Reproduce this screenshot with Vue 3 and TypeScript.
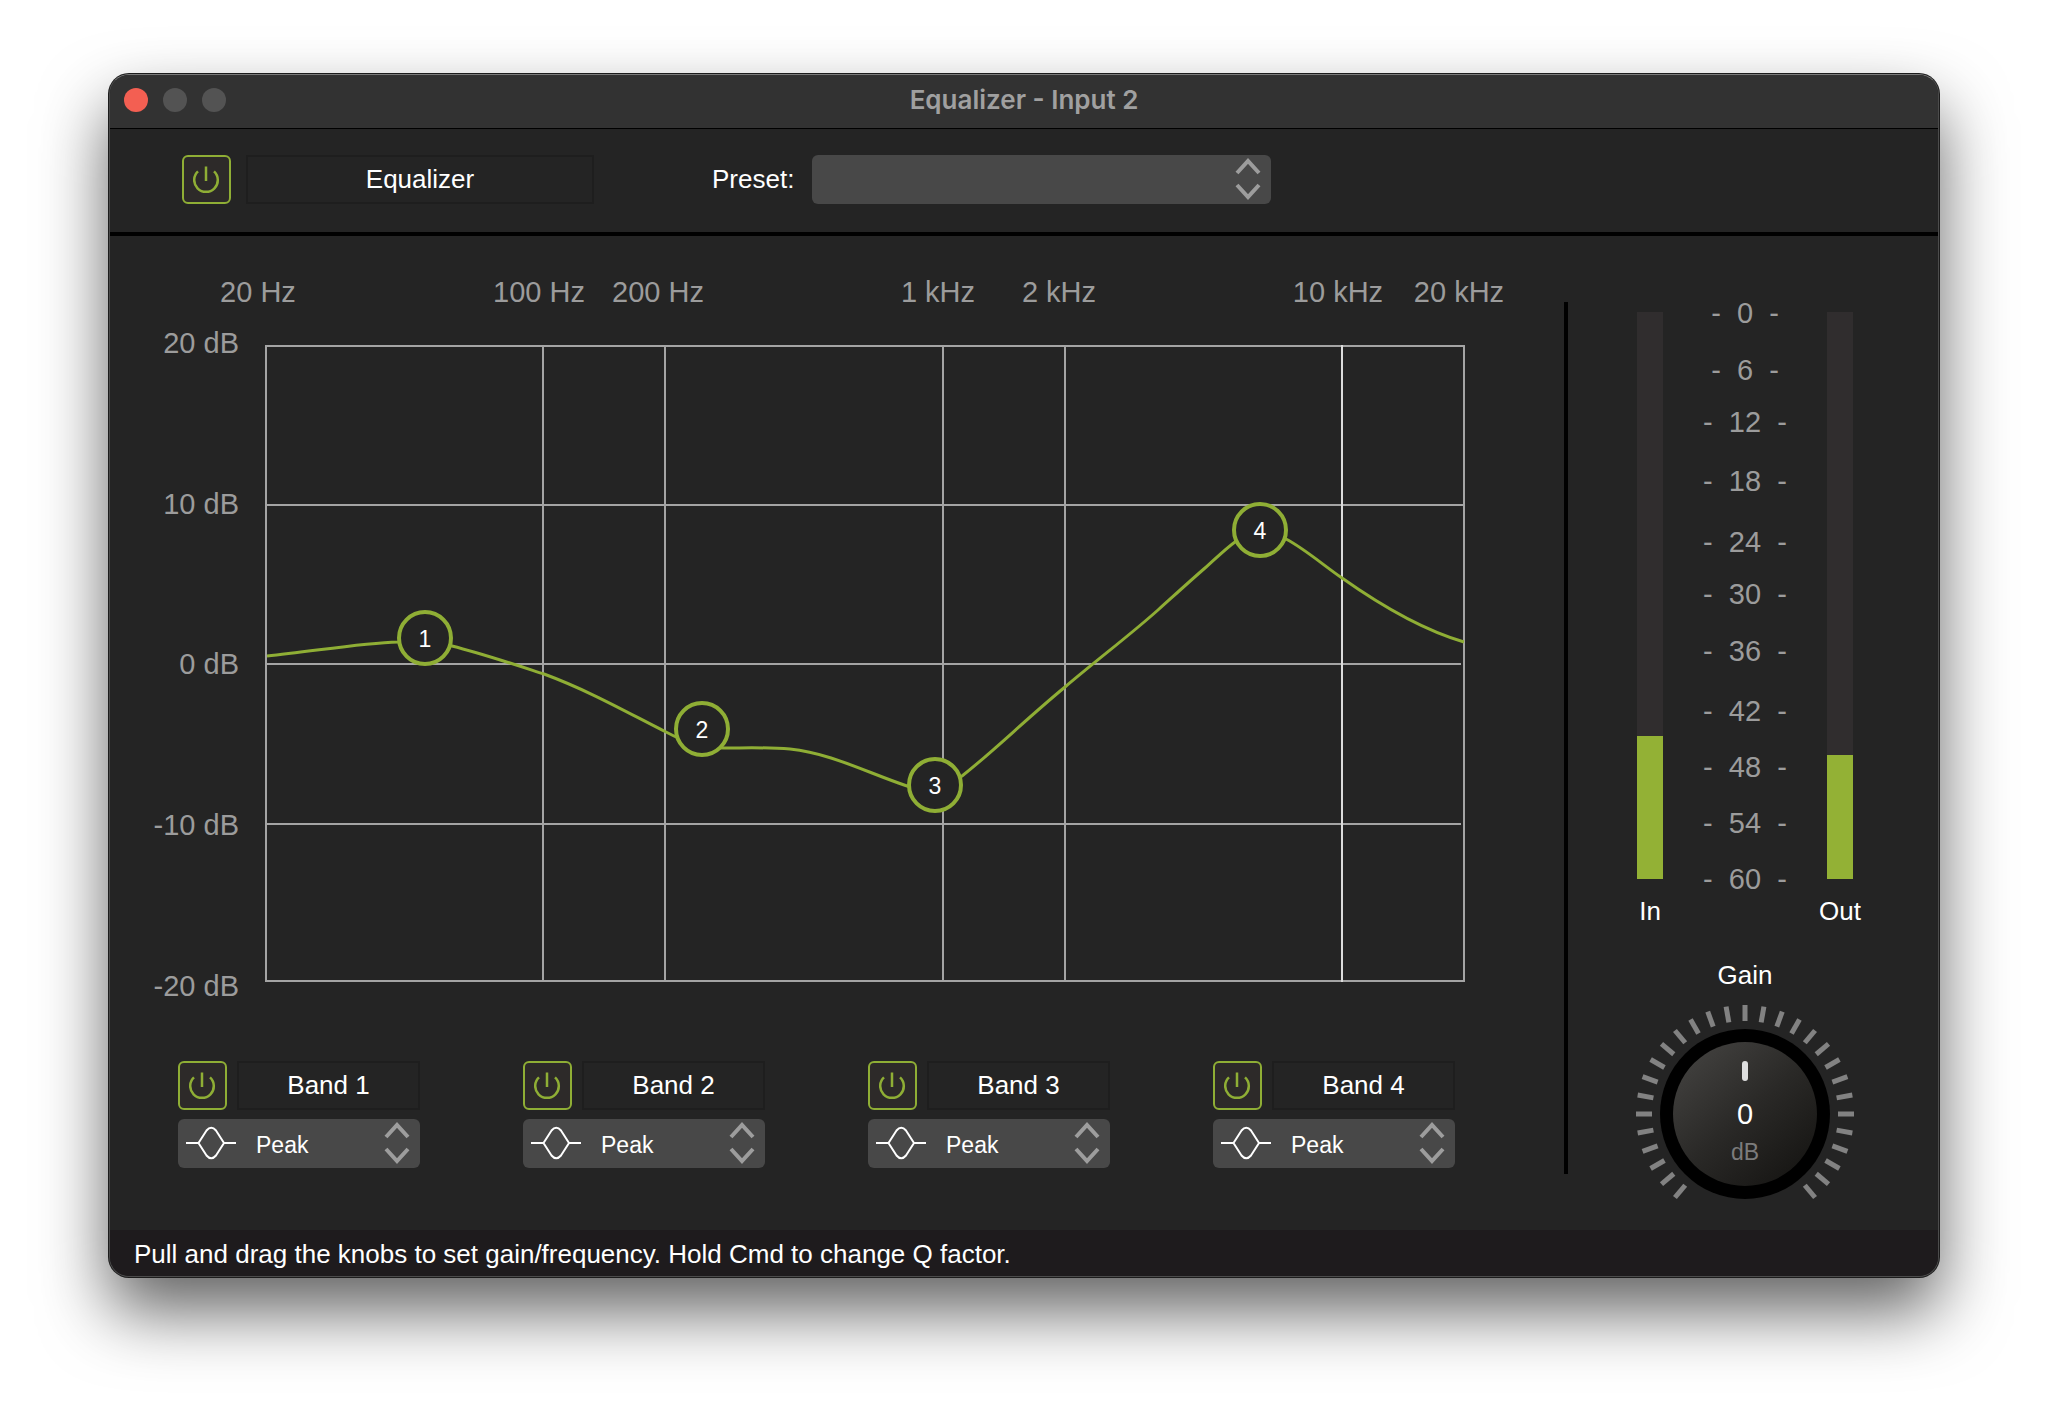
<script setup lang="ts">
import { ref } from 'vue'

interface Mark {
  label: string
  text: number
  line: number
  end?: number
}

interface Handle {
  id: number
  x: number
  y: number
}

// Chart canvas, in the units of its viewBox.
const canvas = { width: 1394, height: 740 }
const plot = { left: 126, right: 1324, top: 76, bottom: 711 }

const frequencies: Mark[] = [
  { label: '20 Hz', text: 118, line: 126 },
  { label: '100 Hz', text: 399, line: 403 },
  { label: '200 Hz', text: 518, line: 525 },
  { label: '1 kHz', text: 798, line: 803 },
  { label: '2 kHz', text: 919, line: 925 },
  { label: '10 kHz', text: 1198, line: 1202 },
  { label: '20 kHz', text: 1319, line: 1324 },
]

const levels: Mark[] = [
  { label: '20 dB', text: 83, line: 76 },
  { label: '10 dB', text: 244, line: 235 },
  { label: '0 dB', text: 404, line: 394, end: 1321 },
  { label: '-10 dB', text: 565, line: 554, end: 1321 },
  { label: '-20 dB', text: 726, line: 711 },
]

const handles: Handle[] = [
  { id: 1, x: 285, y: 368 },
  { id: 2, x: 562, y: 459 },
  { id: 3, x: 795, y: 515 },
  { id: 4, x: 1120, y: 260 },
]

const curve =
  'M127 386 C170 382 220 373 258 372 C282 370 296 372 312 376 C340 383 370 393 404 404 ' +
  'C450 421 490 444 526 462 C545 472 560 478 584 478 C605 478 625 477 650 479 ' +
  'C690 483 728 503 767 516 C785 521 800 522 822 506 C855 480 885 450 925 417 ' +
  'C958 389 990 365 1018 340 C1038 322 1050 311 1065 298 C1080 285 1100 263 1120 260 ' +
  'C1132 261 1138 264 1146 269 C1165 279 1183 295 1202 308 C1243 337 1283 360 1324 372'

const scale = [0, 6, 12, 18, 24, 30, 36, 42, 48, 54, 60]
const meters = [
  { name: 'In', top: 424 },
  { name: 'Out', top: 443 },
]
const meterHeight = 567

const ticks = Array.from({ length: 29 }, (_, i) => -140 + i * 10)

const enabled = ref(true)
const preset = ref('')
const gain = ref(0)
const bands = ref([1, 2, 3, 4].map((id) => ({ id, on: true, type: 'Peak' })))
</script>

<template>
  <main class="window">
    <header class="titlebar">
      <div class="lights">
        <button class="light close" type="button" aria-label="Close"></button>
        <button class="light" type="button" aria-label="Minimize"></button>
        <button class="light" type="button" aria-label="Zoom"></button>
      </div>
      <h1 class="title">Equalizer - Input 2</h1>
    </header>

    <section class="toolbar">
      <button class="power" type="button" aria-label="Equalizer power" :aria-pressed="enabled" @click="enabled = !enabled">
        <svg viewBox="0 0 27 28" width="27" height="28"><path d="M5 5.4A11.8 11.8 0 1 0 21 5.4M13 .5V15" /></svg>
      </button>
      <div class="name main-name">Equalizer</div>
      <label class="preset-label" for="preset">Preset:</label>
      <div class="picker preset">
        <select id="preset" v-model="preset"><option value=""></option></select>
        <svg class="chevrons" viewBox="0 0 26 42" width="26" height="42"><path d="M2 15L13 3L24 15M2 27L13 39L24 27" /></svg>
      </div>
    </section>

    <div class="body">
      <section class="editor">
        <div class="chart">
          <svg class="graph" :viewBox="`0 0 ${canvas.width} ${canvas.height}`">
            <g class="axis">
              <text v-for="f in frequencies" :key="f.label" :x="f.text" y="32" text-anchor="middle">{{ f.label }}</text>
              <text v-for="l in levels" :key="l.label" x="99" :y="l.text" text-anchor="end">{{ l.label }}</text>
            </g>
            <g class="grid">
              <path v-for="l in levels" :key="l.label" :d="`M${plot.left} ${l.line}H${l.end ?? plot.right}`" />
              <path
                v-for="f in frequencies"
                :key="f.label"
                :class="{ bright: f.label === '10 kHz' }"
                :d="`M${f.line} ${plot.top - 1}V${plot.bottom + 1}`"
              />
            </g>
            <path class="curve" :d="curve" />
          </svg>
          <button
            v-for="h in handles"
            :key="h.id"
            class="handle"
            type="button"
            :style="{ left: (h.x / canvas.width) * 100 + '%', top: (h.y / canvas.height) * 100 + '%' }"
          >{{ h.id }}</button>
        </div>

        <div class="bands">
          <div v-for="b in bands" :key="b.id" class="band">
            <button class="power" type="button" :aria-label="`Band ${b.id} power`" :aria-pressed="b.on" @click="b.on = !b.on">
              <svg viewBox="0 0 27 28" width="27" height="28"><path d="M5 5.4A11.8 11.8 0 1 0 21 5.4M13 .5V15" /></svg>
            </button>
            <label class="name" :for="`type-${b.id}`">Band {{ b.id }}</label>
            <div class="picker band-type">
              <svg class="shape" viewBox="0 0 50 34" width="50" height="34">
                <path d="M0 17H12.500M38 17H50M12.500 17L20.500 4.500Q25.250 -1 30 4.500L38 17L30 29.500Q25.250 35 20.500 29.500Z" />
              </svg>
              <select :id="`type-${b.id}`" v-model="b.type"><option>Peak</option></select>
              <svg class="chevrons" viewBox="0 0 26 42" width="26" height="42"><path d="M2 15L13 3L24 15M2 27L13 39L24 27" /></svg>
            </div>
          </div>
        </div>
      </section>

      <div class="divider"></div>

      <aside class="output">
        <div class="meters">
          <div v-for="m in meters" :key="m.name" class="meter">
            <div class="track" role="meter" :aria-label="m.name">
              <div class="fill" :style="{ height: ((meterHeight - m.top) / meterHeight) * 100 + '%' }"></div>
            </div>
            <span class="caption">{{ m.name }}</span>
          </div>
          <div class="scale">
            <span v-for="s in scale" :key="s">-&nbsp; {{ s }} &nbsp;-</span>
          </div>
        </div>

        <label class="caption gain-label" for="gain">Gain</label>
        <div class="knob">
          <svg viewBox="-110 -110 220 220" width="220" height="220">
            <defs>
              <linearGradient id="face" x1="0.15" y1="0.1" x2="0.85" y2="0.9">
                <stop offset="0" stop-color="#403f3d" />
                <stop offset="0.5" stop-color="#2a2927" />
                <stop offset="1" stop-color="#181715" />
              </linearGradient>
            </defs>
            <path v-for="t in ticks" :key="t" class="tick" d="M0 -93V-109" :transform="`rotate(${t})`" />
            <circle r="85" fill="#000" />
            <circle r="72" fill="url(#face)" />
            <path class="pointer" d="M0 -50V-36" :transform="`rotate(${gain * 7})`" />
            <text class="value" y="10" text-anchor="middle">{{ gain }}</text>
            <text class="unit" y="46" text-anchor="middle">dB</text>
          </svg>
          <input id="gain" v-model.number="gain" type="range" min="-20" max="20" />
        </div>
      </aside>
    </div>

    <footer class="hint">Pull and drag the knobs to set gain/frequency. Hold Cmd to change Q factor.</footer>
  </main>
</template>

<style>
body {
  background: #fff;
}
#app {
  padding: 74px 109px 143px;
}
</style>

<style scoped>
.window {
  box-sizing: border-box;
  border: 1px solid #4b4b4b;
  border-top-color: #7a7a7a;
  border-radius: 20px;
  overflow: hidden;
  background: #242424;
  color: #fff;
  font-family: "Liberation Sans", Arial, sans-serif;
  font-size: 26px;
  line-height: 30px;
  box-shadow: 0 0 0 1px #1c1c1c, 0 34px 68px rgba(0, 0, 0, 0.62);
}

button,
select {
  margin: 0;
  font: inherit;
  color: inherit;
}

.titlebar {
  display: grid;
  grid-template-columns: 1fr auto 1fr;
  align-items: center;
  height: 53px;
  box-sizing: border-box;
  padding: 0 14px 3px;
  background: #323232;
}

.lights {
  display: flex;
  gap: 15px;
}

.light {
  width: 24px;
  height: 24px;
  padding: 0;
  border: 0;
  border-radius: 50%;
  background: #535353;
}

.close {
  background: #f35f52;
}

.title {
  margin: 0;
  color: #a0a0a0;
  font-family: Inter, sans-serif;
  font-size: 26px;
  font-weight: 600;
}

.toolbar {
  display: flex;
  align-items: center;
  padding: 26px 72px 28px;
  border-top: 1px solid #000;
  border-bottom: 4px solid #000;
}

.power {
  display: grid;
  place-items: center;
  flex: none;
  box-sizing: border-box;
  width: 49px;
  height: 49px;
  padding: 0;
  border: 2px solid #8fae35;
  border-radius: 6px;
  background: #2d2a29;
}

.power path {
  fill: none;
  stroke: #8fae35;
  stroke-width: 2.5;
}

.name {
  box-sizing: border-box;
  height: 49px;
  border: 2px solid #1e1e1e;
  line-height: 44px;
  text-align: center;
}

.main-name {
  width: 348px;
  margin-left: 15px;
}

.preset-label {
  margin: 0 18px 0 118px;
  padding-bottom: 2px;
}

.picker {
  position: relative;
}

.picker select {
  display: block;
  width: 100%;
  height: 49px;
  border: 0;
  border-radius: 6px;
  appearance: none;
  background: #484848;
}

.preset {
  width: 459px;
}

.chevrons,
.shape {
  position: absolute;
  pointer-events: none;
  fill: none;
}

.chevrons {
  top: 3px;
  right: 10px;
  stroke: #9d9d9d;
  stroke-width: 4;
}

.shape {
  top: 7px;
  left: 8px;
  stroke: #fff;
  stroke-width: 2;
}

.body {
  display: grid;
  grid-template-columns: 1fr 4px 370px;
}

.editor {
  padding-top: 34px;
}

.chart {
  position: relative;
  margin: 0 30px;
}

.graph {
  display: block;
  width: 100%;
}

.axis {
  fill: #9c9c9c;
  font-size: 29px;
}

.grid path {
  stroke: #a4a4a4;
  stroke-width: 2;
}

.grid .bright {
  stroke: #dcdcdc;
}

.curve {
  fill: none;
  stroke: #8fae35;
  stroke-width: 3;
}

.handle {
  position: absolute;
  box-sizing: border-box;
  width: 56px;
  height: 56px;
  padding: 2px 0 0;
  border: 4px solid #8fae35;
  border-radius: 50%;
  background: #242424;
  font-size: 23px;
  transform: translate(-50%, -50%);
}

.bands {
  display: flex;
  justify-content: space-between;
  padding: 51px 109px 62px 68px;
}

.band {
  display: grid;
  grid-template-columns: 49px 183px;
  gap: 9px 10px;
}

.band-type {
  grid-column: 1 / -1;
}

.band-type .shape {
  z-index: 1;
}

.band-type select {
  padding: 2px 40px 0 78px;
  font-size: 23px;
}

.divider {
  margin: 66px 0 56px;
  background: #000;
}

.output {
  display: flex;
  flex-direction: column;
  align-items: center;
  padding: 63px 16px 0 0;
}

.meters {
  display: grid;
  grid-template-columns: 60px 130px 60px;
}

.meter {
  display: flex;
  flex-direction: column;
  align-items: center;
  grid-row: 1;
  padding-top: 13px;
}

.meter:first-child {
  grid-column: 1;
}

.meter:nth-child(2) {
  grid-column: 3;
}

.track {
  display: flex;
  flex-direction: column;
  justify-content: flex-end;
  width: 26px;
  height: 567px;
  margin-bottom: 17px;
  background: #302d2e;
}

.fill {
  background: #93b135;
}

.scale {
  display: grid;
  grid-row: 1;
  grid-column: 2;
  grid-template-rows: 57px 52px 59px 61px 52px 57px 60px 56px 56px 56px 29px;
  color: #9c9c9c;
  font-size: 29px;
  line-height: 29px;
  text-align: center;
}

.gain-label {
  margin: 34px 0 14px;
}

.knob {
  position: relative;
  width: 220px;
  height: 220px;
}

.knob input {
  position: absolute;
  inset: 0;
  width: 100%;
  height: 100%;
  margin: 0;
  opacity: 0;
}

.tick {
  stroke: #828282;
  stroke-width: 5;
}

.pointer {
  stroke: #dedede;
  stroke-width: 6;
  stroke-linecap: round;
}

.value {
  fill: #fff;
  font-size: 29px;
}

.unit {
  fill: #7c7c7c;
  font-size: 23px;
}

.hint {
  padding: 9px 24px 7px;
  background: #1e1b1d;
}
</style>
